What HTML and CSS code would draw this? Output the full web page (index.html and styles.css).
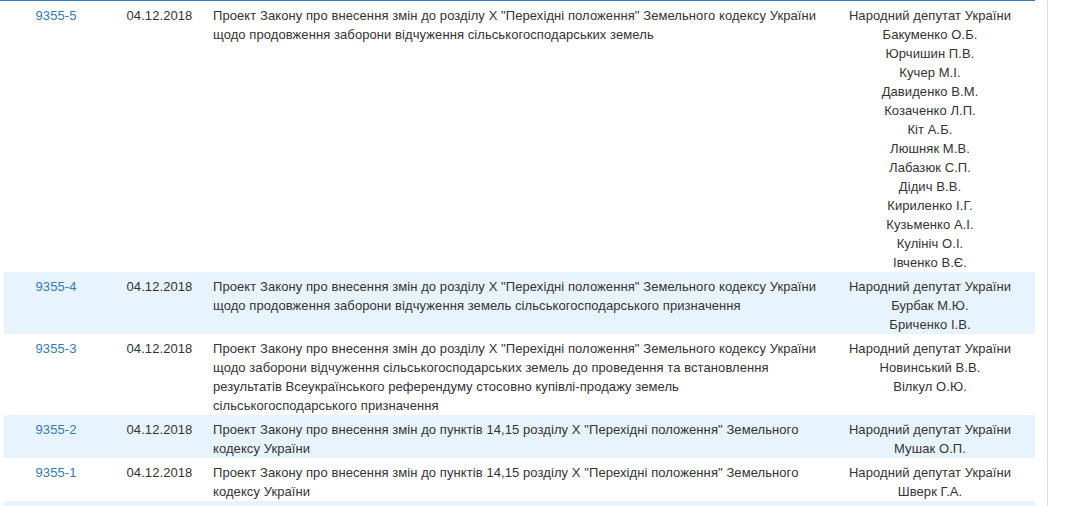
FILE: index.html
```html
<!DOCTYPE html>
<html lang="uk">
<head>
<meta charset="utf-8">
<title>Законопроекти</title>
<link rel="stylesheet" href="styles.css">
</head>
<body>
<div class="page">
  <div class="main">
    <table class="bills">
      <colgroup>
        <col class="c-id"><col class="c-date"><col class="c-title"><col class="c-auth">
      </colgroup>
      <tbody>
        <tr>
          <td class="num"><a href="#">9355-5</a></td>
          <td class="date">04.12.2018</td>
          <td class="title">Проект Закону про внесення змін до розділу Х "Перехідні положення" Земельного кодексу України щодо продовження заборони відчуження сільськогосподарських земель</td>
          <td class="auth">Народний депутат України<br>Бакуменко О.Б.<br>Юрчишин П.В.<br>Кучер М.І.<br>Давиденко В.М.<br>Козаченко Л.П.<br>Кіт А.Б.<br>Люшняк М.В.<br>Лабазюк С.П.<br>Дідич В.В.<br>Кириленко І.Г.<br>Кузьменко А.І.<br>Кулініч О.І.<br>Івченко В.Є.</td>
        </tr>
        <tr>
          <td class="num"><a href="#">9355-4</a></td>
          <td class="date">04.12.2018</td>
          <td class="title">Проект Закону про внесення змін до розділу Х "Перехідні положення" Земельного кодексу України щодо продовження заборони відчуження земель сільськогосподарського призначення</td>
          <td class="auth">Народний депутат України<br>Бурбак М.Ю.<br>Бриченко І.В.</td>
        </tr>
        <tr>
          <td class="num"><a href="#">9355-3</a></td>
          <td class="date">04.12.2018</td>
          <td class="title">Проект Закону про внесення змін до розділу Х "Перехідні положення" Земельного кодексу України щодо заборони відчуження сільськогосподарських земель до проведення та встановлення результатів Всеукраїнського референдуму стосовно купівлі-продажу земель сільськогосподарського призначення</td>
          <td class="auth">Народний депутат України<br>Новинський В.В.<br>Вілкул О.Ю.</td>
        </tr>
        <tr>
          <td class="num"><a href="#">9355-2</a></td>
          <td class="date">04.12.2018</td>
          <td class="title">Проект Закону про внесення змін до пунктів 14,15 розділу Х "Перехідні положення" Земельного кодексу України</td>
          <td class="auth">Народний депутат України<br>Мушак О.П.</td>
        </tr>
        <tr>
          <td class="num"><a href="#">9355-1</a></td>
          <td class="date">04.12.2018</td>
          <td class="title">Проект Закону про внесення змін до пунктів 14,15 розділу Х "Перехідні положення" Земельного кодексу України</td>
          <td class="auth">Народний депутат України<br>Шверк Г.А.</td>
        </tr>
        <tr class="cut">
          <td class="num"></td>
          <td class="date"></td>
          <td class="title"></td>
          <td class="auth"></td>
        </tr>
      </tbody>
    </table>
  </div>
  <div class="side"></div>
</div>
</body>
</html>
```

FILE: styles.css
```css
html, body {
  margin: 0;
  padding: 0;
  background: #fff;
}
body {
  font-family: "Liberation Sans", Arial, sans-serif;
  font-size: 13px;
  line-height: 19px;
  letter-spacing: 0.08px;
  color: #333;
  overflow: hidden;
}
.page {
  display: flex;
  align-items: stretch;
  min-height: 100vh;
}
.main {
  width: 1035px;
  flex: none;
  border-top: 1px solid #337ab7;
}
.side {
  flex: none;
  width: 0;
  margin-left: 12px;
  border-left: 1px solid #dcdcdc;
}
.bills {
  margin-left: 4px;
  width: 1031px;
  border-collapse: collapse;
  table-layout: fixed;
}
.c-id { width: 104px; }
.c-date { width: 103px; }
.c-title { width: 614px; }
.c-auth { width: 210px; }
.bills td {
  vertical-align: top;
  padding: 5px 5px 0 5px;
}
.bills tr.cut td {
  height: 38px;
}
.bills tr:nth-child(even) td {
  background: #e8f4fd;
}
.num, .date, .auth {
  text-align: center;
}
.title {
  text-align: left;
}
.bills td.title {
  padding-left: 2px;
}
.num a {
  color: #337ab7;
  text-decoration: none;
}
```
